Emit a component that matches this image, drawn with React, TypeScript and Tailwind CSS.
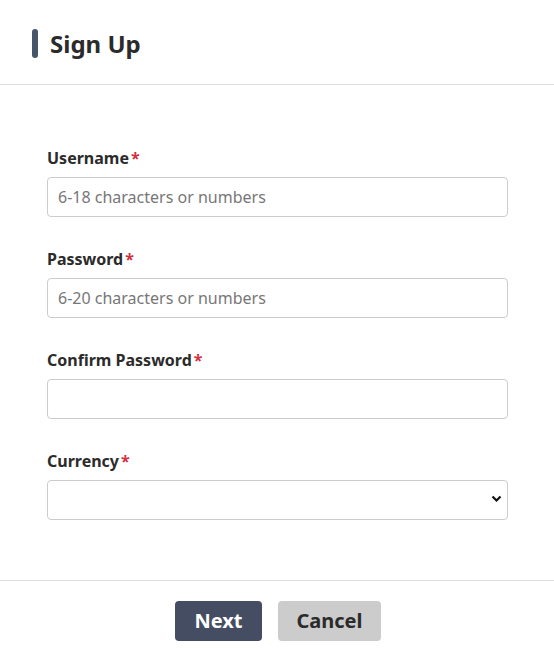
import React from 'react';

const fields = [
  { id: 'username', label: 'Username', placeholder: '6-18 characters or numbers', type: 'text' },
  { id: 'password', label: 'Password', placeholder: '6-20 characters or numbers', type: 'password' },
  { id: 'confirm', label: 'Confirm Password', placeholder: '', type: 'password' },
];

const Label = ({ htmlFor, children }: { htmlFor: string; children: React.ReactNode }) => (
  <label htmlFor={htmlFor} className="flex items-center h-6 mb-[7px] text-base font-bold text-[#2b2b2b]">
    {children}
    <span className="ml-[2px] text-[#d32f3f]">*</span>
  </label>
);

const App = () => {
  return (
    <div className="w-[554px] h-[654px] bg-white text-[#2b2b2b] overflow-hidden" style={{ fontFamily: '"Noto Sans", "Open Sans", sans-serif' }}>
      {/* Header */}
      <div className="h-[85px] flex items-center pl-8 pt-[3px] border-b border-[#dddddd]">
        <span className="w-[6px] h-[29px] rounded-full bg-[#475569] mr-3" />
        <h1 className="text-2xl font-bold text-[#2b2b2b]">Sign Up</h1>
      </div>

      {/* Form */}
      <form className="pl-[47px] pr-[46px] pt-[61px] pb-[30px]">
        {fields.map((f) => (
          <div key={f.id} className="mb-[30px]">
            <Label htmlFor={f.id}>{f.label}</Label>
            <input
              id={f.id}
              type={f.type}
              placeholder={f.placeholder}
              className="w-full h-10 px-[10px] text-base border border-[#cccccc] rounded-[4px] outline-none placeholder:text-[#777777]"
            />
          </div>
        ))}
        <div className="mb-[30px]">
          <Label htmlFor="currency">Currency</Label>
          <div className="relative">
            <select
              id="currency"
              className="w-full h-10 px-[10px] text-base border border-[#cccccc] rounded-[4px] bg-white appearance-none outline-none"
            >
              <option value=""></option>
            </select>
            <svg className="absolute right-[6px] top-[15px] w-[11px] h-[8px] pointer-events-none" viewBox="0 0 11 8">
              <path d="M1.5 1.5 L5.5 5.5 L9.5 1.5" fill="none" stroke="#111" strokeWidth="2.2" />
            </svg>
          </div>
        </div>
      </form>

      {/* Footer */}
      <div className="border-t border-[#dddddd] flex justify-center gap-4 pt-5 pl-[2px]">
        <button type="button" className="h-10 w-[87px] rounded-[4px] bg-[#444d61] text-white text-xl font-bold">
          Next
        </button>
        <button type="button" className="h-10 w-[103px] rounded-[4px] bg-[#cccccc] text-[#2b2b2b] text-xl font-bold">
          Cancel
        </button>
      </div>
    </div>
  );
};

export default App;
